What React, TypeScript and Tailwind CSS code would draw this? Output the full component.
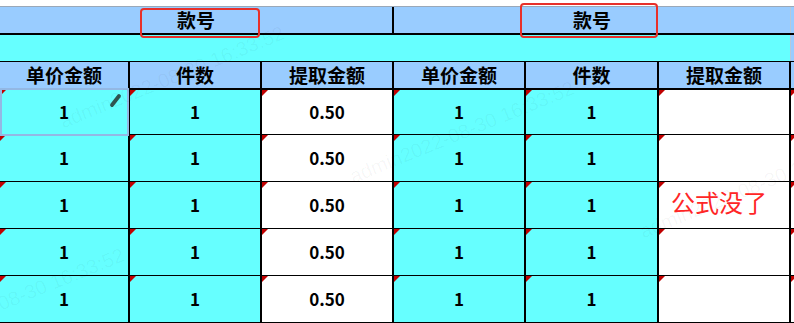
const font = 'font-["Noto_Sans_CJK_SC","Noto_Sans",sans-serif]'

// column widths include the 2px right rule
const cols = [
  { w: 'w-[130px]', bg: 'bg-[#66ffff]', head: '单价金额' },
  { w: 'w-[132px]', bg: 'bg-[#66ffff]', head: '件数' },
  { w: 'w-[132px]', bg: 'bg-white', head: '提取金额' },
  { w: 'w-[132px]', bg: 'bg-[#66ffff]', head: '单价金额' },
  { w: 'w-[133px]', bg: 'bg-[#66ffff]', head: '件数' },
  { w: 'w-[132px]', bg: 'bg-white', head: '提取金额' },
]

const rows = [
  { h: 'h-[45px]', vals: ['1', '1', '0.50', '1', '1', ''] },
  { h: 'h-[47px]', vals: ['1', '1', '0.50', '1', '1', ''] },
  { h: 'h-[47px]', vals: ['1', '1', '0.50', '1', '1', 'note'] },
  { h: 'h-[47px]', vals: ['1', '1', '0.50', '1', '1', ''] },
  { h: 'h-[47px]', vals: ['1', '1', '0.50', '1', '1', ''] },
]

function Corner() {
  return (
    <div className="absolute top-0 left-0 w-0 h-0 border-t-[6px] border-r-[6px] border-t-[#c00000] border-r-transparent" />
  )
}

function Pencil() {
  return (
    <svg className="absolute top-[2px] right-[5px]" width="14" height="16" viewBox="0 0 14 16">
      <line x1="3" y1="13" x2="10" y2="4" stroke="#2f5552" strokeWidth="3.8" strokeLinecap="round" />
    </svg>
  )
}

const marks = [
  'left-[55px] top-[108px]',
  'left-[345px] top-[163px]',
  'left-[635px] top-[218px]',
  'left-[-105px] top-[330px]',
]

export default function App() {
  return (
    <div className={`relative w-[794px] h-[323px] overflow-hidden bg-white text-black ${font}`}>
      <div className="h-[6px] bg-white" />

      {/* merged header */}
      <div className="flex h-[29px] bg-[#99ccff] border-b-2 border-black border-t border-t-[#9aa8b8]">
        <div className="w-[394px] border-r-2 border-black flex items-center justify-center text-[19px] font-bold">款号</div>
        <div className="w-[397px] border-r border-[#b8c8da] flex items-center justify-center text-[19px] font-bold">款号</div>
        <div className="flex-1" />
      </div>

      <div className="flex h-[27px] border-b border-black">
        <div className="w-[791px] bg-[#66ffff] border-r border-[#b8c8da]" />
        <div className="flex-1 bg-[#99ccff]" />
      </div>

      <div className="flex h-[28px] bg-[#99ccff] border-b-2 border-black">
        {cols.map((c, i) => (
          <div key={i} className={`${c.w} border-r-2 border-black flex items-center justify-center text-[19px] font-bold`}>
            {c.head}
          </div>
        ))}
        <div className="flex-1" />
      </div>

      {rows.map((r, ri) => (
        <div key={ri} className={`flex ${r.h} border-b border-black`}>
          {cols.map((c, ci) =>
            r.vals[ci] === 'note' ? (
              <div key={ci} className={`relative ${c.w} ${c.bg} border-r-2 border-black flex items-center justify-start pl-[12px] pb-[7px]`}>
                <Corner />
                <span className="text-[24px] leading-none text-[#ff2626]">公式没了</span>
              </div>
            ) : (
              <div key={ci} className={`relative ${c.w} ${c.bg} border-r-2 border-black flex items-center justify-center text-[17px] font-bold`}>
                <Corner />
                {r.vals[ci]}
                {ri === 0 && ci === 0 && <Pencil />}
              </div>
            )
          )}
          <div className="relative flex-1 bg-white">
            <Corner />
          </div>
        </div>
      ))}

      {/* selected cell */}
      <div className="absolute left-0 top-[88px] w-[129px] h-[48px] border-2 border-[#93b8e4] pointer-events-none" />

      {/* watermarks */}
      {marks.map((m, i) => (
        <span
          key={i}
          className={`absolute ${m} origin-top-left -rotate-[22deg] whitespace-nowrap text-[20px] text-black/[0.04] pointer-events-none font-["Liberation_Sans",sans-serif]`}
        >
          admin2022-08-30 16:33:52
        </span>
      ))}

      {/* red annotation boxes */}
      <div className="absolute left-[140px] top-[8px] w-[120px] h-[30px] border-2 border-[#e8302a] rounded-[4px]" />
      <div className="absolute left-[520px] top-[3px] w-[138px] h-[35px] border-2 border-[#e8302a] rounded-[4px]" />
    </div>
  )
}
